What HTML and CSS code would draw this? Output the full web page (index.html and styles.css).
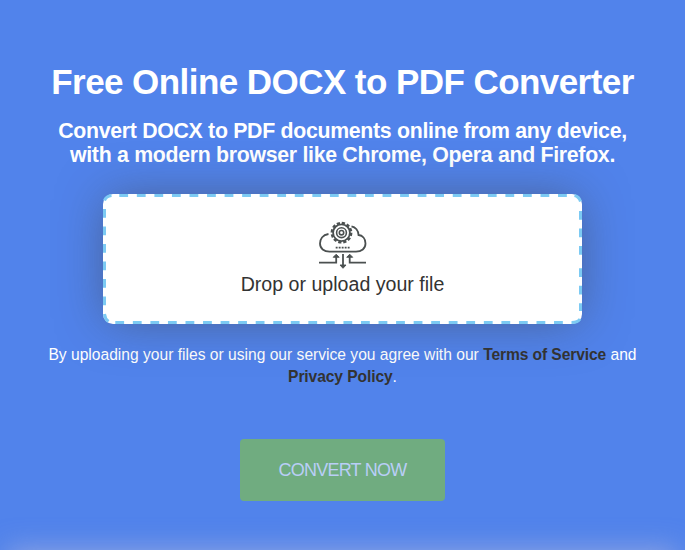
FILE: index.html
```
<!DOCTYPE html>
<html lang="en">
<head>
<meta charset="utf-8">
<title>Free Online DOCX to PDF Converter</title>
<link rel="stylesheet" href="styles.css">
</head>
<body>
<main class="converter">
  <h1 class="title">Free Online DOCX to PDF Converter</h1>
  <h2 class="subtitle">Convert DOCX to PDF documents online from any device,<br>with a modern browser like Chrome, Opera and Firefox.</h2>
  <div class="dropzone">
    <svg class="dashes" viewBox="0 0 479 130" aria-hidden="true">
      <path d="M16.3 1.5H470" stroke-dasharray="8.8 8.75"/>
      <path d="M1.5 15V119" stroke-dasharray="8.8 8.7"/>
      <path d="M12.3 128.5H465" stroke-dasharray="8.8 8.75"/>
      <path d="M477.5 17V61M477.5 74.3V117" stroke-dasharray="8.8 8.7"/>
      <path d="M1.5 6.5Q3 2.2 8.5 1.5M1.5 120Q2 125 5.5 127.5M471.5 1.5Q476 2.5 477.5 7.5M468.5 128.5Q475 128.5 477 125"/>
    </svg>
    <svg class="cloud" viewBox="0 0 48 50" aria-hidden="true">
      <path d="M9.5 13C3.5 14 1 18.5 1 22.5C1 27.5 5 30.7 10.5 30.7H37C42.5 30.7 46.5 27.5 46.5 22.5C46.5 17.5 43.5 14.3 39.5 14C39.5 9.5 36.5 6 32.5 5.3"/>
      <circle class="teeth" cx="22.5" cy="11.7" r="9.7"/>
      <circle class="gear" cx="22.5" cy="11.7" r="8.4"/>
      <circle class="hub" cx="22.5" cy="11.7" r="4.9"/>
      <circle class="hub" cx="22.5" cy="11.7" r="2.2"/>
      <path class="dots" d="M16.7 26.6H31"/>
      <path d="M0 41.6H17.2V35M47 41.6H30.7V35M24 33V45"/>
      <path class="heads" d="M14.2 36.3 17.2 33.2 20.2 36.3ZM27.7 36.3 30.7 33.2 33.7 36.3ZM21 44 24 47.3 27 44Z"/>
    </svg>
    <span class="drop-label">Drop or upload your file</span>
  </div>
  <p class="terms">By uploading your files or using our service you agree with our <b>Terms of Service</b> and<br><b>Privacy Policy</b>.</p>
  <button class="convert">CONVERT NOW</button>
</main>
<div class="panel"></div>
</body>
</html>
```
FILE: styles.css
```
* { box-sizing: border-box; }
html, body { height: 550px; overflow: hidden; }
body {
  margin: 0;
  background: #5183eb;
  color: #fff;
  font-family: "Liberation Sans", Arial, sans-serif;
}
.converter {
  height: 550px;
  display: flex;
  flex-direction: column;
  align-items: center;
  text-align: center;
}
.title { margin: 62px 0 0; font-size: 35px; line-height: 40px; letter-spacing: -.56px; white-space: nowrap; }
.subtitle { margin: 18px 0 0; font-size: 21.3px; line-height: 23.6px; letter-spacing: -.3px; white-space: nowrap; }
.dropzone {
  position: relative;
  flex: none;
  width: 479px;
  height: 130px;
  margin-top: 27.2px;
  padding-top: 26.5px;
  display: flex;
  flex-direction: column;
  align-items: center;
  border-radius: 10px;
  background: #fff;
  box-shadow: 0 0 48px -4px rgba(66, 66, 66, .55);
}
.dashes {
  position: absolute;
  inset: 0;
  width: 479px;
  height: 130px;
  fill: none;
  stroke: #7ccaf3;
  stroke-width: 3;
}
.cloud {
  width: 48px;
  height: 50px;
  fill: none;
  stroke: #4b5050;
  stroke-width: 1.8;
}
.teeth { stroke-width: 2.4; stroke-dasharray: 3.2 1.879; }
.gear { stroke-width: 1.8; }
.hub { stroke-width: 1.6; }
.dots { stroke-width: 1.7; stroke-dasharray: 1.9 1.1; }
.heads { fill: #4b5050; stroke-width: .9; }
.drop-label { margin-top: 1px; color: #333; font-size: 19.6px; line-height: 24px; }
.terms { margin: 19.8px 0 0; font-size: 15.62px; line-height: 21.5px; white-space: nowrap; }
.terms b { color: #333; letter-spacing: -.1px; }
.convert {
  flex: none;
  width: 205px;
  height: 62px;
  margin-top: 52px;
  padding: 0;
  border: 0;
  border-radius: 4px;
  background: #70ac80;
  color: #b9cef7;
  font: 18px/62px "Liberation Sans", Arial, sans-serif;
  letter-spacing: -.75px;
}
.panel {
  height: 60px;
  margin: 0 8px;
  box-shadow: 0 0 28px rgba(190, 190, 220, .6);
}
```
